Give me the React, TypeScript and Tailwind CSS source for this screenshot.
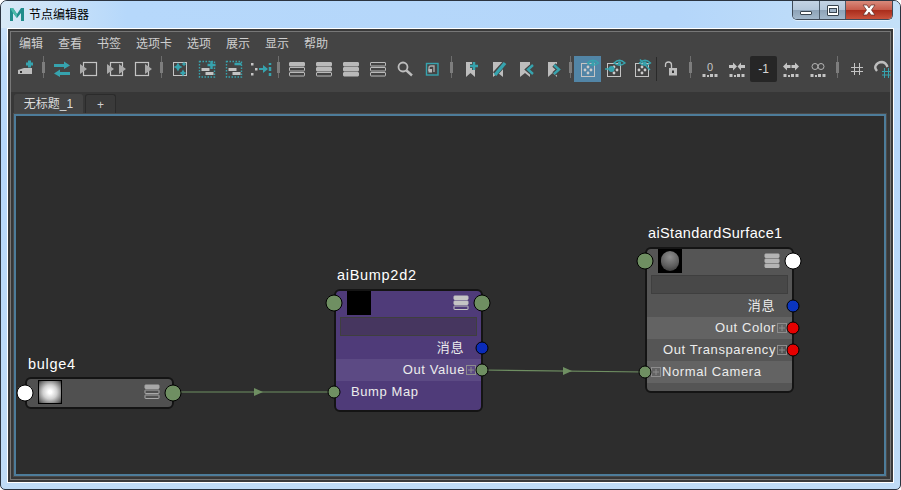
import React from "react";

const G = "#b9b9b9";
const T = "#36a3ae";
const BG = "#444444";
const Rows = ({ n, x = 0, y = 0, w = 15, c = G }: { n: number; x?: number; y?: number; w?: number; c?: string }) => (
  <g>
    {[0, 1, 2].map((i) => (
      <rect key={i} x={x + 0.5} y={y + i * 5 + 0.5} width={w} height={3.5} rx={0.5} fill={n === 3 || i < n ? c : "none"} stroke={c} />
    ))}
  </g>
);
const Flag = ({ x = 5, w = 9, children }: { x?: number; w?: number; children?: React.ReactNode }) => (
  <>
    <path d={`M${x} 4H${x + w}V19L${x + w / 2} 15L${x} 19Z`} fill="#bdbdbd" />
    {children}
  </>
);
const Eye = ({ x = 13, y = 5 }: { x?: number; y?: number }) => (
  <g>
    <path d={`M${x - 5.5} ${y}Q${x} ${y - 5.5} ${x + 5.5} ${y}Q${x} ${y + 4.5} ${x - 5.5} ${y}Z`} fill="none" stroke={T} strokeWidth="1.4" />
    <circle cx={x} cy={y} r="1.7" fill={T} />
  </g>
);
const NodeBox = ({ x = 4, y = 5 }: { x?: number; y?: number }) => (
  <g>
    <rect x={x + 0.5} y={y + 0.5} width="13" height="13" fill="none" stroke="#c4c4c4" />
    <circle cx={x + 7} cy={y + 4} r="1.4" fill="#ccc" />
    <circle cx={x + 4} cy={y + 7} r="1.4" fill="#ccc" />
    <circle cx={x + 10} cy={y + 7} r="1.4" fill="#ccc" />
    <circle cx={x + 7} cy={y + 10} r="1.4" fill="#ccc" />
  </g>
);
const Spark = ({ x, y, r }: { x: number; y: number; r: number }) => (
  <path d={`M${x} ${y - r}L${x + r * 0.35} ${y - r * 0.35}L${x + r} ${y}L${x + r * 0.35} ${y + r * 0.35}L${x} ${y + r}L${x - r * 0.35} ${y + r * 0.35}L${x - r} ${y}L${x - r * 0.35} ${y - r * 0.35}Z`} fill={T} />
);
const Dots = () => (
  <g fill="#c4c4c4">
    <rect x="3.500" y="16" width="3" height="3" />
    <rect x="8" y="17" width="2" height="2" />
    <rect x="11" y="16" width="3" height="3" />
    <rect x="15.500" y="16" width="3" height="3" />
  </g>
);
const Tri = ({ x }: { x: number }) => <path d={`M${x} 6L${x + 7} 11L${x} 16Z`} fill="#a9a9a9" />;
const DotFrame = () => (
  <>
    <rect x="3.500" y="3.500" width="15" height="15.500" fill="none" stroke={T} strokeWidth="1.400" strokeDasharray="1.500 1.500" />
    <rect x="5.500" y="10" width="8" height="3" fill="#c4c4c4" />
    <rect x="9.500" y="14" width="8" height="3" fill="#c4c4c4" />
  </>
);

const icons: Record<string, React.ReactNode> = {
  add: (
    <>
      <path d="M4 12L10 10H18V16H4Z" fill="#bdbdbd" />
      <rect x="6" y="13" width="2" height="2" fill="#333" />
      <path d="M12 6H19M15.500 2.500V9.500" stroke={T} strokeWidth="3" />
    </>
  ),
  swap: (
    <>
      <path d="M3 6H13V3.500L19 7.500L13 11V9H3Z" fill={T} />
      <path d="M19 14H9V11.500L3 15.500L9 19V17H19Z" fill={T} />
    </>
  ),
  left: (
    <>
      <rect x="5.500" y="4.500" width="13" height="13" fill="none" stroke="#c4c4c4" strokeWidth="1.200" />
      <Tri x={2} />
    </>
  ),
  both: (
    <>
      <rect x="5.500" y="4.500" width="12" height="13" fill="none" stroke="#c4c4c4" strokeWidth="1.200" />
      <Tri x={2} />
      <Tri x={14} />
    </>
  ),
  right: (
    <>
      <rect x="3.500" y="4.500" width="13" height="13" fill="none" stroke="#c4c4c4" strokeWidth="1.200" />
      <Tri x={13} />
    </>
  ),
  spark: (
    <>
      <rect x="4.500" y="4.500" width="13" height="13" fill="none" stroke="#c4c4c4" />
      <Spark x={9} y={9} r={4.500} />
      <Spark x={15} y={6} r={2.500} />
      <Spark x={14} y={15} r={3.500} />
    </>
  ),
  dotPlus: (
    <>
      <DotFrame />
      <path d="M11.500 7H19.500M15.500 3V11" stroke={T} strokeWidth="2.500" />
    </>
  ),
  dotMinus: (
    <>
      <DotFrame />
      <path d="M11.500 6H18.500" stroke={T} strokeWidth="2.500" />
    </>
  ),
  flow: (
    <>
      <rect x="1" y="5" width="2.500" height="2.500" fill="#c4c4c4" />
      <rect x="5" y="10" width="2.500" height="2.500" fill="#c4c4c4" />
      <rect x="1" y="15" width="2.500" height="2.500" fill="#c4c4c4" />
      <path d="M9 10H13V7L18 11L13 15V12H9Z" fill={T} />
      <path d="M20 5V7M20 9V13M20 15V18" stroke={T} strokeWidth="2.500" />
    </>
  ),
  l1: <Rows n={1} x={3} y={4} />,
  l2: <Rows n={2} x={3} y={4} />,
  l3: <Rows n={3} x={3} y={4} />,
  l0: <Rows n={0} x={3} y={4} />,
  search: (
    <>
      <circle cx="9" cy="9" r="4.500" fill="none" stroke="#bdbdbd" strokeWidth="1.800" />
      <path d="M12.500 12.500L18 17.500" stroke="#bdbdbd" strokeWidth="2.400" />
    </>
  ),
  frame: (
    <>
      <rect x="5.500" y="5.500" width="11.500" height="11.500" fill="none" stroke={T} strokeWidth="1.400" />
      <path d="M8 13V10Q8 8 10 8H13V14" fill="none" stroke="#aaa" strokeWidth="1.400" />
      <rect x="7.500" y="11" width="3.500" height="3.500" fill="#bbb" />
    </>
  ),
  bPlus: (
    <Flag>
      <path d="M9 8H17M13 4V12" stroke={BG} strokeWidth="4" />
      <path d="M9 8H17M13 4V12" stroke={T} strokeWidth="2.500" />
    </Flag>
  ),
  bPen: (
    <Flag x={5} w={10}>
      <path d="M7 16L17 5" stroke={BG} strokeWidth="5.500" />
      <path d="M7 17L17 5" stroke={T} strokeWidth="3.400" />
    </Flag>
  ),
  bPrev: (
    <Flag x={5} w={10}>
      <path d="M18 7L13 11.500L18 16" fill="none" stroke={BG} strokeWidth="5" />
      <path d="M18 7L13 11.500L18 16" fill="none" stroke={T} strokeWidth="2.400" />
    </Flag>
  ),
  bNext: (
    <Flag x={6} w={9}>
      <path d="M12 7L17 11.500L12 16" fill="none" stroke={BG} strokeWidth="5" />
      <path d="M12 7L17 11.500L12 16" fill="none" stroke={T} strokeWidth="2.400" />
    </Flag>
  ),
  eye: (
    <>
      <NodeBox x={4} y={5} />
      <Eye x={16} y={5} />
    </>
  ),
  eyeDot: (
    <>
      <NodeBox x={3} y={5} />
      <Eye x={15.500} y={5} />
      <path d="M1 11H6" stroke={T} strokeWidth="1.500" />
      <circle cx="7.500" cy="11" r="3" fill={T} />
    </>
  ),
  eyeOff: (
    <>
      <NodeBox x={4} y={5} />
      <Eye x={14} y={5} />
      <path d="M9 1.500L19 12" stroke={T} strokeWidth="1.500" />
    </>
  ),
  lock: (
    <>
      <path d="M5.500 9V7Q5.500 4 8.500 4Q11.500 4 11.500 7V10" fill="none" stroke="#c4c4c4" strokeWidth="1.300" />
      <rect x="9" y="10" width="8" height="7.500" fill="#bdbdbd" />
      <rect x="12" y="12.500" width="2" height="2.500" fill="#333" />
    </>
  ),
  zero: (
    <>
      <text x="11" y="13" textAnchor="middle" fontSize="11" fill="#c4c4c4" fontFamily="'Liberation Sans', sans-serif">0</text>
      <Dots />
    </>
  ),
  inward: (
    <>
      <path d="M3 7H7V4.500L11 8.500L7 12.500V10H3ZM19 7H15V4.500L11.500 8.500L15 12.500V10H19Z" fill="#c4c4c4" />
      <Dots />
    </>
  ),
  outward: (
    <>
      <path d="M7 7H10.500V10H7V12.500L3 8.500L7 4.500ZM15 7H11.500V10H15V12.500L19 8.500L15 4.500Z" fill="#c4c4c4" />
      <Dots />
    </>
  ),
  inf: (
    <>
      <circle cx="8" cy="8.500" r="3" fill="none" stroke="#b4b4b4" />
      <circle cx="14" cy="8.500" r="3" fill="none" stroke="#b4b4b4" />
      <Dots />
    </>
  ),
  grid: <path d="M8.500 5V17M13.500 5V17M5 9.500H17M5 13.500H17" stroke="#c4c4c4" strokeWidth="1" />,
  magnet: (
    <>
      <path d="M4 13Q1.500 10 2.500 8Q4.500 4 9 4Q13 4.500 14.500 9" fill="none" stroke="#bdbdbd" strokeWidth="2.400" />
      <path d="M11.500 10V20M15.500 10V20M9 13.500H18M9 17H18" stroke={T} strokeWidth="1" />
    </>
  ),
};

const Sep = ({ w = 10 }: { w?: number }) => (
  <div className="flex h-[22px] shrink-0 justify-center" style={{ width: w }}>
    <div className="flex h-full w-[1px] items-center justify-center bg-[#6e6e6e]">
      <div className="h-[11px] w-[3px] shrink-0 bg-[#7d7d7d]" />
    </div>
  </div>
);

const Slot = ({ name, selected }: { name: string; selected?: boolean }) => (
  <div className={`flex h-[26px] w-[27px] shrink-0 items-center justify-center ${selected ? "bg-[#5285a6]" : ""}`}>
    <svg width="22" height="22" viewBox="0 0 22 22" className="block overflow-visible">
      {icons[name]}
    </svg>
  </div>
);

const Plus = () => (
  <svg width="10" height="10" viewBox="0 0 10 10" className="block shrink-0">
    <rect x="0.500" y="0.500" width="9" height="9" fill="none" stroke="#8d8d8d" />
    <path d="M2 5H8M5 2V8" stroke="#8d8d8d" />
  </svg>
);

const Port = ({ side, size, color }: { side: "l" | "r"; size: number; color: string }) => (
  <div
    className={`absolute top-1/2 z-10 -translate-y-1/2 rounded-full border border-black ${side === "l" ? "-translate-x-1/2" : "translate-x-1/2"}`}
    style={{ width: size, height: size, backgroundColor: color, ...(side === "l" ? { left: -2 } : { right: -1 }) }}
  />
);

const GREEN = "#6f8f62";

const Thumb = ({ kind }: { kind: "bulge" | "black" | "ball" }) => (
  <div
    className={`h-[24px] w-[24px] shrink-0 ${
      kind === "bulge"
        ? "border border-black bg-[radial-gradient(circle,#ffffff_10%,#d0d0d0_45%,#6a6a6a_85%,#333333_100%)]"
        : "bg-black"
    }`}
  >
    {kind === "ball" && (
      <div className="ml-[3px] mt-[2px] h-[20px] w-[18px] rounded-full bg-[radial-gradient(circle_at_50%_30%,#8e8e8e,#5c5c5c_60%,#2c2c2c)]" />
    )}
  </div>
);

type P = { size: number; color: string };
const Row = ({ bg, children, right, left, pr = 0, pl = 0 }: { bg?: string; children: React.ReactNode; right?: P; left?: P; pr?: number; pl?: number }) => (
  <div
    className="relative flex h-[22px] items-center whitespace-nowrap text-[13px] tracking-[0.6px] text-[#ececec]"
    style={{ backgroundColor: bg, paddingRight: pr, paddingLeft: pl, justifyContent: pl ? "flex-start" : "flex-end" }}
  >
    {left && <Port side="l" size={left.size} color={left.color} />}
    {children}
    {right && <Port side="r" size={right.size} color={right.color} />}
  </div>
);

const Node = ({ label, labelTop, labelClass, left, top, bg, thumb, stack, stackColor, outColor, inColor, field, children }: { label: string; labelTop: number; labelClass: string; left: number; top: number; bg: string; thumb: "bulge" | "black" | "ball"; stack: number; stackColor: string; outColor: string; inColor: string; field?: string; children?: React.ReactNode }) => (
  <div className="absolute w-[149px]" style={{ left, top }}>
    <div className={`absolute left-[3px] whitespace-nowrap text-[14.500px] text-white ${labelClass}`} style={{ top: labelTop }}>
      {label}
    </div>
    <div className="rounded-[6px] border-2 border-[#141414]" style={{ backgroundColor: bg }}>
      <div className={`relative flex items-start pl-[11px] pr-[12px] ${field ? "mb-[2px] h-[24px]" : "h-[28px] pt-[1px]"}`}>
        <Port side="l" size={17} color={inColor} />
        <Thumb kind={thumb} />
        <svg width="16" height="16" viewBox="0 0 16 16" className="ml-auto mt-[4px]">
          <Rows n={stack} x={0.500} y={0.500} w={14} c={stackColor} />
        </svg>
        <Port side="r" size={17} color={outColor} />
      </div>
      {field && <div className="mx-[4px] mb-[1px] h-[19px] border border-[#3f3f3f]" style={{ backgroundColor: field }} />}
      {children}
    </div>
  </div>
);

const Arrow = ({ x, y }: { x: number; y: number }) => <path d={`M${x} ${y - 4}L${x + 9} ${y}L${x} ${y + 4}Z`} fill="#6f8f62" />;

export default function App() {
  return (
    <div className="flex h-[490px] w-[901px] flex-col overflow-hidden rounded-t-[7px] rounded-b-[5px] border border-[#2b3440] bg-[linear-gradient(180deg,#d4e6f6_0%,#bcdafa_12%,#b6d7fb_30%,#c0dcf6_100%)] font-['Liberation_Sans','Noto_Sans_CJK_SC',sans-serif]">
      <div className="flex h-[27px] shrink-0 items-start bg-[linear-gradient(90deg,#d8e9f6_0%,#b6d8fb_14%,#b4d6fa_75%,#c4e0f8_100%)]">
        <svg width="16" height="16" viewBox="0 0 16 16" className="ml-[8px] mt-[6px] shrink-0">
          <path d="M1 14V1H4L8 7L12 1H15V14H12V6L8 11L4 6V14Z" fill="#1f8c8c" />
          <path d="M1 1H4L8 7V11L4 6Z" fill="#49b9aa" />
        </svg>
        <div className="ml-[4px] mt-[6px] text-[12px] leading-[17px] text-black">节点编辑器</div>
        <div className="ml-auto mr-[7px] flex h-[19px] overflow-hidden rounded-b-[5px] border border-t-0 border-[#3f4a58] shadow-[0_1px_0_#ffffff80]">
          <div className="flex w-[27px] items-end justify-center border-r border-[#4b5a6a] bg-[linear-gradient(180deg,#c3d3e4_0%,#b3c6da_50%,#8ea3b8_52%,#a3b8cb_100%)] pb-[4px]">
            <div className="h-[4px] w-[12px] rounded-[1px] border border-[#39444f] bg-white" />
          </div>
          <div className="flex w-[26px] items-center justify-center border-r border-[#4b5a6a] bg-[linear-gradient(180deg,#c3d3e4_0%,#b3c6da_50%,#8ea3b8_52%,#a3b8cb_100%)]">
            <div className="flex h-[11px] w-[12px] items-center justify-center rounded-[1px] border border-[#39444f] bg-white">
              <div className="h-[5px] w-[8px] border border-[#39444f] bg-[#9fb2c6]" />
            </div>
          </div>
          <div className="flex w-[46px] items-center justify-center bg-[linear-gradient(180deg,#d98a7c_0%,#c85c4c_48%,#aa2d1c_52%,#c9523c_100%)]">
            <svg width="16" height="12" viewBox="0 0 16 12">
              <path d="M2 1H6L8 4L10 1H14L10.500 6L14 11H10L8 8L6 11H2L5.500 6Z" fill="#fff" stroke="#5b2a24" strokeWidth="0.700" />
            </svg>
          </div>
        </div>
      </div>
      <div className="mx-[6px] mb-[6px] flex min-h-0 flex-1 flex-col border border-white bg-[#3a3a3a] p-[2px]">
        <div className="flex min-h-0 flex-1 flex-col border border-[#777] bg-[#444]">
          <div className="flex h-[22px] shrink-0 items-center gap-[15px] pl-[8px] pt-[1px] text-[12px] text-[#cfcfcf]">
            {["编辑", "查看", "书签", "选项卡", "选项", "展示", "显示", "帮助"].map((m) => (
              <span key={m}>{m}</span>
            ))}
          </div>
          <div className="flex h-[38px] shrink-0 items-start pt-[2px]">
            <Slot name="add" />
            <Sep />
            <Slot name="swap" />
            <Slot name="left" />
            <Slot name="both" />
            <Slot name="right" />
            <Sep />
            <Slot name="spark" />
            <Slot name="dotPlus" />
            <Slot name="dotMinus" />
            <Slot name="flow" />
            <Sep w={9} />
            <Slot name="l1" />
            <Slot name="l2" />
            <Slot name="l3" />
            <Slot name="l0" />
            <Slot name="search" />
            <Slot name="frame" />
            <Sep w={13} />
            <Slot name="bPlus" />
            <Slot name="bPen" />
            <Slot name="bPrev" />
            <Slot name="bNext" />
            <Sep w={8} />
            <Slot name="eye" selected />
            <Slot name="eyeDot" />
            <Slot name="eyeOff" />
            <div className="ml-[1px] mt-[1px] h-[24px] w-[1px] shrink-0 bg-[#2a2a2a]" />
            <Slot name="lock" />
            <Sep w={12} />
            <Slot name="zero" />
            <Slot name="inward" />
            <div className="flex h-[26px] w-[27px] shrink-0 items-center justify-center rounded-[2px] bg-[#262626] text-[12px] text-[#d6d6d6]">-1</div>
            <Slot name="outward" />
            <Slot name="inf" />
            <Sep w={12} />
            <Slot name="grid" />
            <Slot name="magnet" />
          </div>
          <div className="flex min-h-0 flex-1 flex-col bg-[#373737] pl-[3px] pr-[4px] pt-[2px]">
            <div className="flex h-[20px] shrink-0 gap-[2px]">
              <div className="flex w-[69px] items-center justify-center rounded-t-[3px] bg-[#444] text-[12px] text-[#dcdcdc]">无标题_1</div>
              <div className="flex w-[31px] items-center justify-center rounded-t-[3px] border border-b-0 border-[#2b2b2b] bg-[#3a3a3a] text-[12px] text-[#d0d0d0]">+</div>
            </div>
            <div className="relative min-h-0 flex-1 border-2 border-[#4d7c9a] bg-[#2d2d2d] outline outline-1 outline-[#4a4a4a]">
              <svg width="869" height="358" className="absolute left-0 top-0 block">
                <path d="M157 276H318" stroke="#6f8f62" strokeWidth="1.200" fill="none" />
                <Arrow x={238} y={276} />
                <path d="M466 254L629 256" stroke="#6f8f62" strokeWidth="1.200" fill="none" />
                <Arrow x={547} y={255} />
              </svg>
              <Node label="bulge4" labelTop={-23} labelClass="tracking-[0.7px]" left={9} top={261} bg="#505050" thumb="bulge" stack={1} stackColor="#a8a8a8" inColor="#ffffff" outColor={GREEN} />
              <Node label="aiBump2d2" labelTop={-24} labelClass="tracking-[0.7px]" left={318} top={173} bg="#4f3b79" thumb="black" stack={2} stackColor="#c4c4c4" inColor={GREEN} outColor={GREEN} field="#46365f">
                <Row right={{ size: 13, color: "#0a2bb8" }} pr={17}>消息</Row>
                <Row bg="#5c4a84" right={{ size: 13, color: GREEN }} pr={5}>
                  Out Value<span className="ml-[1px]"><Plus /></span>
                </Row>
                <Row left={{ size: 13, color: GREEN }} pl={15}>Bump Map</Row>
                <div className="h-[7px]" />
              </Node>
              <Node label="aiStandardSurface1" labelTop={-24} labelClass="tracking-[0.35px]" left={629} top={131} bg="#555555" thumb="ball" stack={3} stackColor="#b4b4b4" inColor={GREEN} outColor="#ffffff" field="#484848">
                <Row right={{ size: 13, color: "#0a35c0" }} pr={17}>消息</Row>
                <Row bg="#636363" right={{ size: 13, color: "#e60000" }} pr={5}>
                  Out Color<span className="ml-[1px]"><Plus /></span>
                </Row>
                <Row right={{ size: 13, color: "#e60000" }} pr={5}>
                  Out Transparency<span className="ml-[1px]"><Plus /></span>
                </Row>
                <Row bg="#636363" left={{ size: 13, color: GREEN }} pl={4}>
                  <span className="mr-[1px]"><Plus /></span>Normal Camera
                </Row>
                <div className="h-[8px]" />
              </Node>
            </div>
            <div className="h-[3px] shrink-0" />
          </div>
        </div>
      </div>
    </div>
  );
}
